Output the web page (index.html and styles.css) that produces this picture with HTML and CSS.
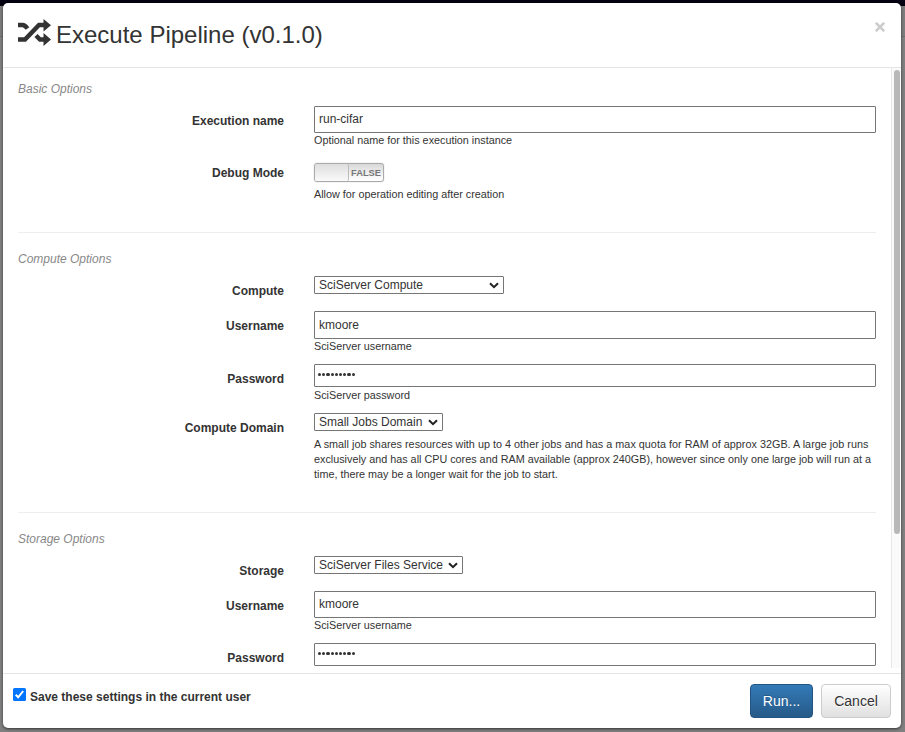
FILE: index.html
```html
<!DOCTYPE html>
<html lang="en">
<head>
<meta charset="utf-8">
<title>Execute Pipeline</title>
<link rel="stylesheet" href="styles.css">
</head>
<body>
<div class="modal">
  <header class="modal-header">
    <svg class="shuffle" width="34" height="28" viewBox="0 0 34 28">
      <path class="line" d="M0 6H4.500C6.500 6 8 7.500 9.500 9.500M0 20.500H7L21 6H27M18 16.500L22 20.500H27"/>
      <path class="head" d="M25.500 0L33 6.200L25.500 12.500ZM25.500 14L33 20.500L25.500 27Z"/>
    </svg>
    <h1>Execute Pipeline (v0.1.0)</h1>
    <button class="close" type="button" aria-label="Close"><svg width="10" height="10" viewBox="0 0 10 10"><path d="M.8 .8L9.200 9.200M9.200 .8L.8 9.200"/></svg></button>
  </header>
  <main class="modal-body">
    <form class="options">
      <section>
        <h2>Basic Options</h2>
        <div class="row"><label>Execution name</label><div><div class="input name">run-cifar</div><p>Optional name for this execution instance</p></div></div>
        <div class="row debug"><label>Debug Mode</label><div><div class="toggle"><i></i><span>FALSE</span></div><p>Allow for operation editing after creation</p></div></div>
      </section>
      <section>
        <h2>Compute Options</h2>
        <div class="row"><label>Compute</label><div><div class="select compute"><span>SciServer Compute</span><svg width="10" height="7" viewBox="0 0 10 7"><path d="M1 1.200L5 5.200L9 1.200"/></svg></div></div></div>
        <div class="row user"><label>Username</label><div><div class="input tall">kmoore</div><p>SciServer username</p></div></div>
        <div class="row pass"><label>Password</label><div><div class="input password"><i></i><i></i><i></i><i></i><i></i><i></i><i></i><i></i><i></i></div><p>SciServer password</p></div></div>
        <div class="row domain"><label>Compute Domain</label><div><div class="select jobs"><span>Small Jobs Domain</span><svg width="10" height="7" viewBox="0 0 10 7"><path d="M1 1.200L5 5.200L9 1.200"/></svg></div><p class="long"><span class="wide">A small job shares resources with up to 4 other jobs and has a max quota for RAM of approx 32GB. A large job runs</span><br>exclusively and has all CPU cores and RAM available (approx 240GB), however since only one large job will run at a<br>time, there may be a longer wait for the job to start.</p></div></div>
      </section>
      <section>
        <h2>Storage Options</h2>
        <div class="row"><label>Storage</label><div><div class="select files"><span>SciServer Files Service</span><svg width="10" height="7" viewBox="0 0 10 7"><path d="M1 1.200L5 5.200L9 1.200"/></svg></div></div></div>
        <div class="row user"><label>Username</label><div><div class="input">kmoore</div><p>SciServer username</p></div></div>
        <div class="row pass"><label>Password</label><div><div class="input password"><i></i><i></i><i></i><i></i><i></i><i></i><i></i><i></i><i></i></div></div></div>
      </section>
    </form>
    <div class="scrollbar"><div class="thumb"></div></div>
  </main>
  <footer class="modal-footer">
    <div class="save"><svg width="13" height="13" viewBox="0 0 13 13"><rect width="13" height="13" rx="1.500"/><path d="M2.700 6.800L5.200 9.300L10.200 3"/></svg><span>Save these settings in the current user</span></div>
    <button class="btn run" type="button">Run...</button>
    <button class="btn cancel" type="button">Cancel</button>
  </footer>
</div>
</body>
</html>
```
FILE: styles.css
```css
* { box-sizing: border-box; }
body {
  margin: 0;
  height: 732px;
  padding: 3px 4px 4px 3px;
  overflow: hidden;
  background: linear-gradient(#03000f 0 6px, #7d7d7d 6px 36px, #6e6e6e 36px 37px, #808080 37px);
  color: #333;
  font: 12px/16px "Liberation Sans", Arial, sans-serif;
}
.modal {
  height: 725px;
  display: flex;
  flex-direction: column;
  overflow: hidden;
  border-radius: 5px;
  background: #fff;
  box-shadow: 0 1px 3px rgba(0, 0, 0, .6);
}
.modal-header {
  height: 65px;
  flex: none;
  display: flex;
  align-items: flex-start;
  padding: 16px 16px 0 15px;
  border-bottom: 1px solid #e5e5e5;
}
.shuffle { flex: none; }
.shuffle .line { fill: none; stroke: #333; stroke-width: 4.500; }
.shuffle .head { fill: #333; }
h1 { margin: 1px 0 0 4px; font-size: 24px; line-height: 30px; font-weight: 400; white-space: nowrap; }
.close { margin: 3px 0 0 auto; padding: 0; border: 0; background: none; line-height: 0; }
.close path { fill: none; stroke: #ccc; stroke-width: 2.600; }
.modal-body { height: 600px; flex: none; display: flex; overflow: hidden; }
.options { width: 888px; flex: none; padding: 0 15px; }
section { padding: 18px 0 30px; border-bottom: 1px solid #eee; }
section:first-child { padding-top: 13px; }
section:last-child { padding-bottom: 0; border: 0; }
h2 { margin: 0 0 9px; font-size: 12px; line-height: 16px; font-style: italic; font-weight: 400; color: #888; }
.row { display: grid; grid-template-columns: 266px 562px; column-gap: 30px; }
.row label { padding-top: 7px; text-align: right; font-weight: 700; }
.debug { margin-top: 15px; }
.row.debug label { padding-top: 2px; }
.user { margin-top: 12px; }
.pass, .domain { margin-top: 10px; }
p { margin: 0; font-size: 10.800px; line-height: 15px; white-space: nowrap; }
p.long { margin-top: 6px; }
.wide { letter-spacing: .02px; }
.input { height: 27px; padding: 0 4px; border: 1px solid #767676; border-radius: 1px; line-height: 24px; }
.tall { height: 28px; line-height: 26px; }
.password { height: 23px; margin-bottom: 1px; display: flex; gap: 1px; padding: 8px 3px 0 3px; }
.password i { width: 3.200px; height: 3.200px; border-radius: 50%; background: #333; }
.select { height: 18px; display: flex; justify-content: space-between; align-items: center; padding: 0 4px; border: 1px solid #767676; border-radius: 1px; line-height: 16px; white-space: nowrap; }
.select path { fill: none; stroke: #222; stroke-width: 2; }
.compute { width: 190px; }
.jobs { width: 129px; }
.files { width: 149px; }
.toggle {
  width: 70px;
  height: 19px;
  display: flex;
  margin-bottom: 5px;
  border: 1px solid #aaa;
  border-radius: 3px;
  background: linear-gradient(#d8d8d8, #f2f2f2 60%, #fff);
  box-shadow: 0 0 1px #999;
  color: #777;
  font: 700 9.300px/18px "Liberation Sans", Arial, sans-serif;
}
.toggle i { width: 34px; border-right: 1px solid #bbb; border-radius: 2px; background: linear-gradient(#dedede, #fafafa); }
.toggle span { padding-left: 2px; }
.scrollbar { width: 10px; flex: none; padding: 2px; border-left: 1px solid #e7e7e7; background: #fafafa; }
.thumb { width: 6px; height: 464px; border-radius: 3px; background: #b8b8b8; }
.modal-footer { flex: 1; margin-top: 5px; display: flex; align-items: flex-start; padding: 10px 10px 0; border-top: 1px solid #e5e5e5; }
.save { display: flex; gap: 4px; margin-right: auto; padding-top: 4px; font-weight: 700; white-space: nowrap; }
.save span { padding-top: 1px; }
.save rect { fill: #0075ff; }
.save path { fill: none; stroke: #fff; stroke-width: 2; }
.btn { height: 34px; padding: 0; border-radius: 4px; font: 14px/32px "Liberation Sans", Arial, sans-serif; }
.run { width: 63px; margin-right: 8px; border: 1px solid #245580; background: linear-gradient(#337ab7, #265a88); color: #fff; text-shadow: 0 -1px rgba(0, 0, 0, .2); }
.cancel { width: 70px; border: 1px solid #ccc; background: linear-gradient(#fff, #e0e0e0); color: #333; text-shadow: 0 1px #fff; }
```
